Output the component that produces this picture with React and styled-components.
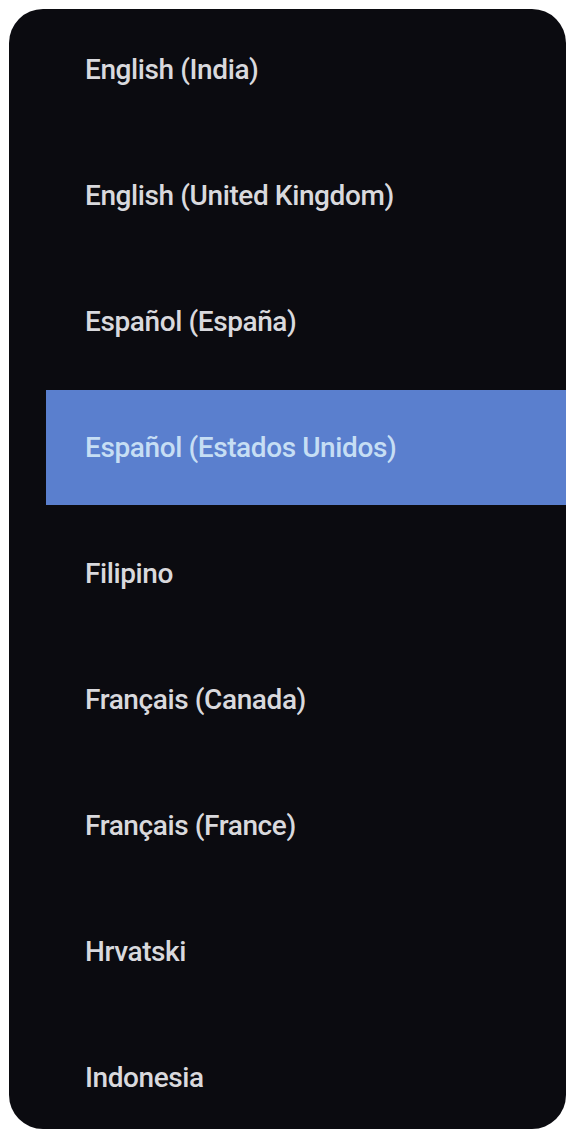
import React from 'react'
import styled, { createGlobalStyle } from "styled-components";

const GlobalStyle = createGlobalStyle`
html, body {
    margin: 0;
    padding: 0;
    background: #ffffff;
}
`;

const languages = [
    "English (India)",
    "English (United Kingdom)",
    "Español (España)",
    "Español (Estados Unidos)",
    "Filipino",
    "Français (Canada)",
    "Français (France)",
    "Hrvatski",
    "Indonesia",
]

const App = () => {
    const selected = 3
    return (
        <>
        <GlobalStyle />
        <Panel>
            <List>
                {languages.map((lang, i) => (
                    <Row key={lang}>
                        <Item active={i === selected}>
                            <Label active={i === selected}>{lang}</Label>
                        </Item>
                    </Row>
                ))}
            </List>
        </Panel>
        </>
    )
}

const Panel = styled.div`
margin: 9px 4px 2px 9px;
height: 1120px;
background: #0b0b10;
border-radius: 34px;
overflow: hidden;
`;

const List = styled.div`
display: flex;
flex-direction: column;
margin-top: -2px;
`;

const Row = styled.div`
height: 126px;
flex: none;
padding: 5px 0 6px 37px;
box-sizing: border-box;
display: flex;
`;

const Item = styled.div`
flex: 1;
display: flex;
align-items: center;
padding-left: 39px;
background: ${p => p.active ? "#5a7fce" : "transparent"};
`;

const Label = styled.span`
font-family: Roboto, "Liberation Sans", sans-serif;
font-size: 28px;
font-weight: 500;
letter-spacing: -0.4px;
color: ${p => p.active ? "#c6def4" : "#d9d9dd"};
white-space: nowrap;
`;

export default App;
